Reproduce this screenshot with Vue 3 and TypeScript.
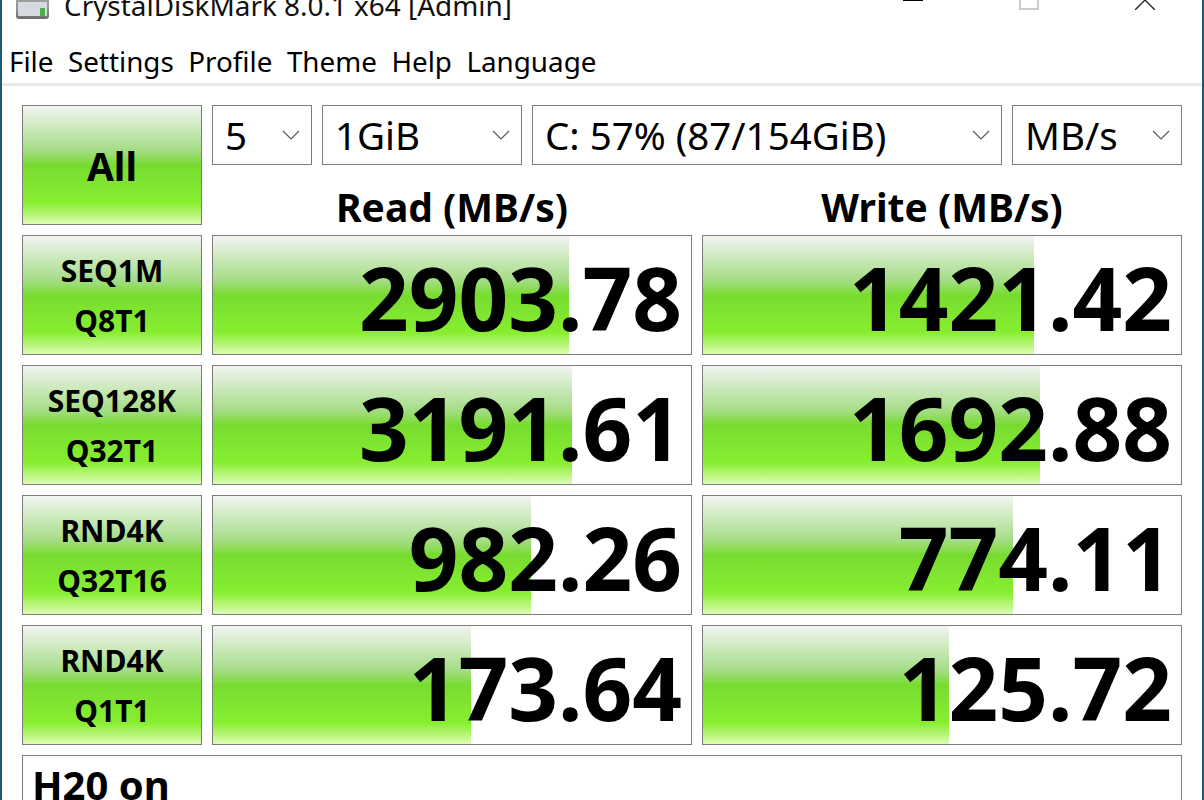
<script setup lang="ts">
interface Row { top: string; bottom: string; read: string; readBar: number; write: string; writeBar: number }
const menus: string[] = ['File', 'Settings', 'Profile', 'Theme', 'Help', 'Language']
const rows: Row[] = [
  { top: 'SEQ1M', bottom: 'Q8T1', read: '2903.78', readBar: 356, write: '1421.42', writeBar: 331 },
  { top: 'SEQ128K', bottom: 'Q32T1', read: '3191.61', readBar: 359, write: '1692.88', writeBar: 337 },
  { top: 'RND4K', bottom: 'Q32T16', read: '982.26', readBar: 318, write: '774.11', writeBar: 310 },
  { top: 'RND4K', bottom: 'Q1T1', read: '173.64', readBar: 258, write: '125.72', writeBar: 246 },
]
const combos = [
  { label: '5', cls: 'c1' },
  { label: '1GiB', cls: 'c2' },
  { label: 'C: 57% (87/154GiB)', cls: 'c3' },
  { label: 'MB/s', cls: 'c4' },
]
</script>

<template>
  <div class="window">
    <header class="titlebar">
      <svg class="appicon" width="34" height="20" viewBox="0 0 34 20">
        <defs>
          <linearGradient id="drive" x1="0" y1="0" x2="0" y2="1">
            <stop offset="0" stop-color="#a8aeaa" />
            <stop offset="0.6" stop-color="#8e9290" />
            <stop offset="1" stop-color="#6a6e6c" />
          </linearGradient>
        </defs>
        <rect x="0" y="-6" width="33" height="25" rx="3" fill="url(#drive)" />
        <rect x="2" y="2" width="29" height="14" rx="1" fill="#d6d8e2" />
        <rect x="24" y="8" width="5" height="8" fill="#48b040" />
      </svg>
      <span class="title">CrystalDiskMark 8.0.1 x64 [Admin]</span>
      <div class="controls">
        <div class="cap"><svg width="20" height="10"><rect x="0" y="0" width="20" height="1" fill="#000" /></svg></div>
        <div class="cap wide"><svg width="20" height="10"><rect x="1" y="-4" width="18" height="13" fill="none" stroke="#ccc" stroke-width="2" /></svg></div>
        <div class="cap"><svg width="20" height="10"><path d="M0 10 L10 0 L20 10" fill="none" stroke="#222" stroke-width="1.4" /></svg></div>
      </div>
    </header>

    <nav class="menubar">
      <span v-for="m in menus" :key="m" class="menu">{{ m }}</span>
    </nav>

    <main class="content">
      <section class="toprow">
        <button class="tile all">All</button>
        <div class="topright">
          <div class="combos">
            <div v-for="c in combos" :key="c.label" class="combo" :class="c.cls">
              <span>{{ c.label }}</span>
              <svg width="18" height="10" viewBox="0 0 18 10"><path d="M1 1 L9 9 L17 1" fill="none" stroke="#555" stroke-width="1.1" /></svg>
            </div>
          </div>
          <div class="heads">
            <div class="head">Read (MB/s)</div>
            <div class="head">Write (MB/s)</div>
          </div>
        </div>
      </section>

      <section v-for="(r, i) in rows" :key="i" class="row">
        <button class="tile test"><span>{{ r.top }}</span><span>{{ r.bottom }}</span></button>
        <div class="result">
          <div class="bar" :style="{ width: r.readBar + 'px' }"></div>
          <span class="value">{{ r.read }}</span>
        </div>
        <div class="result">
          <div class="bar" :style="{ width: r.writeBar + 'px' }"></div>
          <span class="value">{{ r.write }}</span>
        </div>
      </section>

      <section class="comment">H20 on</section>
    </main>
  </div>
</template>

<style>
html, body { margin: 0; background: #fff; overflow: hidden; }
</style>

<style scoped>
.window {
  width: 1204px;
  height: 800px;
  box-sizing: border-box;
  overflow: hidden;
  background: #fff;
  border-left: 2px solid #1f5a78;
  border-right: 2px solid #1f5a78;
  font-family: "Noto Sans", "Open Sans", sans-serif;
  color: #000;
}
.titlebar {
  height: 21px;
  display: flex;
  align-items: flex-end;
  overflow: hidden;
  padding-left: 14px;
}
.appicon { flex: none; margin-bottom: 1px; }
.title {
  margin-left: 14px;
  font-size: 27.9px;
  line-height: 36px;
  margin-bottom: -2px;
  color: #111;
  white-space: nowrap;
}
.controls { margin-left: auto; display: flex; align-self: flex-start; }
.cap { width: 115px; height: 10px; display: flex; justify-content: center; }
.cap.wide { width: 117px; }
.cap svg { display: block; }
.menubar {
  height: 65px;
  box-sizing: border-box;
  padding: 22px 0 0 7px;
  display: flex;
  gap: 14.5px;
  border-bottom: 3px solid #e8e8e8;
}
.menu { font-size: 27.8px; line-height: 36px; white-space: nowrap; }
.content {
  padding: 19px 20px 0;
  display: flex;
  flex-direction: column;
  gap: 10px;
}
.toprow { display: flex; gap: 10px; height: 120px; }
.tile, .result, .combo, .comment {
  box-sizing: border-box;
  border: 1px solid #7c7c7c;
}
.tile {
  width: 180px;
  flex: none;
  padding: 1px 0 0;
  font-family: inherit;
  color: #000;
  font-weight: 700;
  background: linear-gradient(180deg, #f2f5f2 0%, #a4dc84 38%, #78dc30 50%, #88ee30 82%, #ddfcb4 100%);
}
.all { font-size: 39px; }
.topright { width: 970px; display: flex; flex-direction: column; gap: 10px; }
.combos { display: flex; gap: 10px; height: 60px; }
.combo {
  height: 60px;
  display: flex;
  align-items: center;
  justify-content: space-between;
  padding: 0 11px 0 12px;
  font-size: 38.5px;
  background: #fff;
}
.c1 { width: 100px; }
.c2 { width: 200px; }
.c3 { width: 470px; }
.c4 { width: 170px; }
.heads { display: flex; gap: 10px; padding-top: 10px; }
.head {
  width: 480px;
  text-align: center;
  font-size: 39px;
  font-weight: 700;
  line-height: 44px;
}
.row { display: flex; gap: 10px; height: 120px; }
.test {
  display: flex;
  flex-direction: column;
  align-items: center;
  justify-content: center;
  font-size: 30px;
  line-height: 50px;
}
.result {
  position: relative;
  width: 480px;
  display: flex;
  align-items: center;
  justify-content: flex-end;
  padding: 4px 9px 0 0;
  background: #fff;
  overflow: hidden;
}
.bar {
  position: absolute;
  left: 0;
  top: 0;
  bottom: 0;
  background: linear-gradient(180deg, #f2f5f2 0%, #a4dc84 38%, #78dc30 50%, #88ee30 82%, #ddfcb4 100%);
}
.value {
  position: relative;
  font-size: 87px;
  font-weight: 700;
  line-height: 114px;
}
.comment {
  height: 120px;
  padding-left: 9px;
  font-size: 40px;
  font-weight: 700;
  line-height: 58px;
}
</style>
